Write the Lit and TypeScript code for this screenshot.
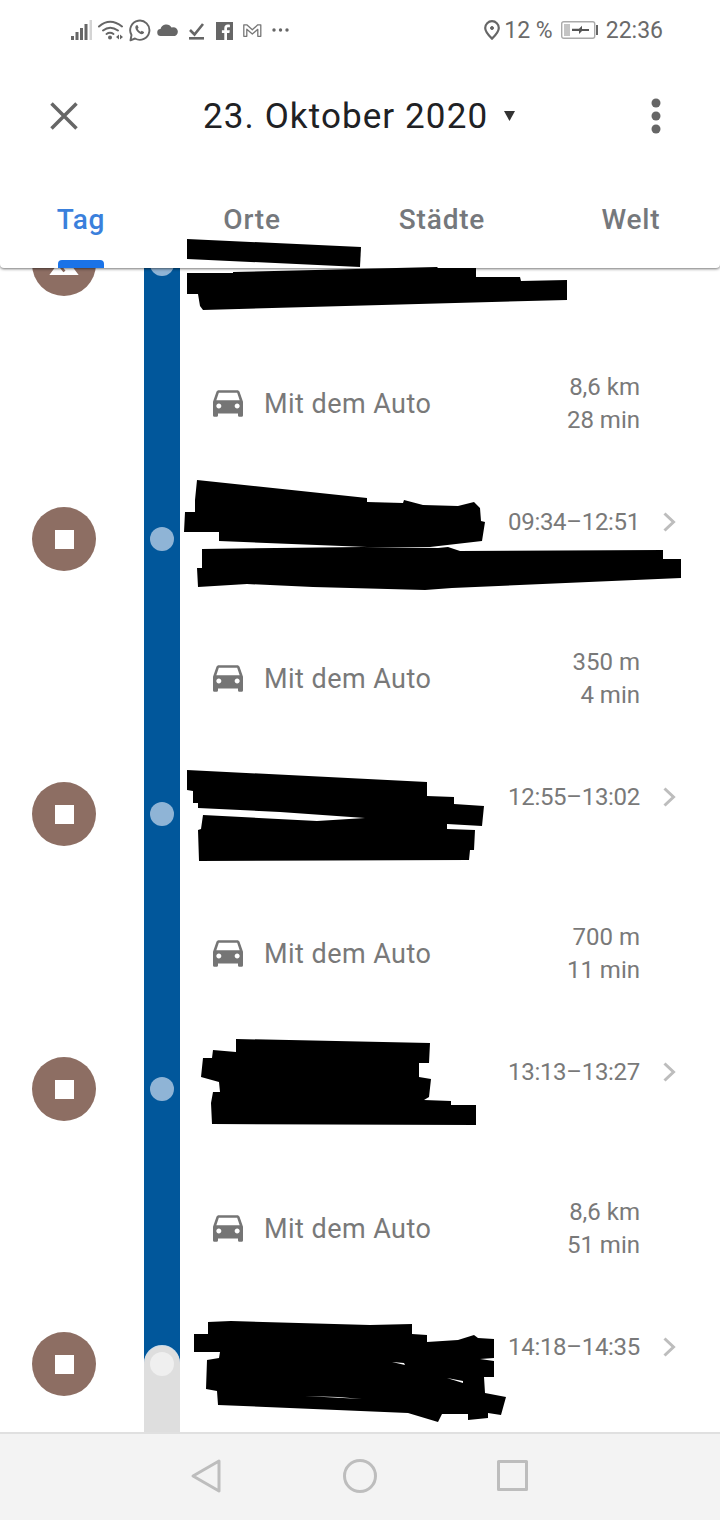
import { LitElement, html, css, svg } from 'lit';
import { customElement } from 'lit/decorators.js';

const CAR =
  'M18.92 6.01C18.72 5.42 18.16 5 17.5 5h-11c-.66 0-1.21.42-1.42 1.01L3 12v8c0 .55.45 1 1 1h1c.55 0 1-.45 1-1v-1h12v1c0 .55.45 1 1 1h1c.55 0 1-.45 1-1v-8l-2.08-5.99zM6.5 16c-.83 0-1.5-.67-1.5-1.5S5.67 13 6.5 13s1.5.67 1.5 1.5S7.33 16 6.5 16zm11 0c-.83 0-1.5-.67-1.5-1.5s.67-1.5 1.5-1.5 1.5.67 1.5 1.5-.67 1.5-1.5 1.5zM5 11l1.5-4.5h11L19 11H5z';

// scribbled-out place names, in page coordinates
const BLACK = [
  '187,239 361,247 360,267 187,259',
  '187,273 233,273 233,272 437,267 438,268 476,268 476,277 520,277 521,281 567,280 567,300 203,310 200,306 198,294 187,294',
  '197,480 367,498 367,502 403,503 404,500 423,505 458,506 474,502 480,508 481,521 485,522 482,541 430,547 367,547 219,541 219,532 184,532 185,512 195,512 195,500',
  '202,549 363,547 438,548 448,547 460,551 663,550 663,559 681,559 681,578 452,588 425,590 313,587 247,584 198,587 197,568 202,568',
  '187,770 427,782 427,796 454,797 454,804 484,806 482,826 447,824 447,829 475,830 474,850 470,850 469,860 199,861 198,830 201,829 203,815 317,821 365,818 280,812 198,808 198,803 193,803 193,791 187,790',
  '236,1039 430,1043 429,1063 419,1063 419,1077 431,1079 429,1097 424,1100 451,1101 451,1105 476,1105 476,1125 212,1124 211,1103 213,1092 220,1092 219,1082 201,1077 203,1058 212,1058 213,1050 236,1052',
  '208,1322 231,1321 370,1325 412,1324 412,1334 427,1335 427,1342 458,1340 474,1335 478,1338 494,1339 494,1358 480,1359 494,1361 494,1377 484,1377 485,1393 506,1397 501,1415 488,1413 488,1418 468,1420 468,1414 442,1414 438,1422 408,1413 218,1405 217,1391 206,1389 207,1360 219,1358 220,1352 194,1352 194,1334 208,1334',
];
const GAPS = ['392,1362 405,1365 404,1363', '447,1378 463,1383 463,1381', '305,1396 362,1399 338,1397'];

type Row = { kind: 'stop'; time: string; terrain?: boolean; last?: boolean } | { kind: 'drive'; dist: string; dur: string };

const ROWS: Row[] = [
  { kind: 'stop', time: '', terrain: true },
  { kind: 'drive', dist: '8,6 km', dur: '28 min' },
  { kind: 'stop', time: '09:34–12:51' },
  { kind: 'drive', dist: '350 m', dur: '4 min' },
  { kind: 'stop', time: '12:55–13:02' },
  { kind: 'drive', dist: '700 m', dur: '11 min' },
  { kind: 'stop', time: '13:13–13:27' },
  { kind: 'drive', dist: '8,6 km', dur: '51 min' },
  { kind: 'stop', time: '14:18–14:35', last: true },
];

@customElement('app-root')
export class AppRoot extends LitElement {
  static styles = css`
    :host {
      display: block;
      width: 720px;
      height: 1520px;
      font-family: Roboto, 'Noto Sans', sans-serif;
      background: #fff;
    }
    .page {
      position: relative;
      height: 1520px;
      display: flex;
      flex-direction: column;
      overflow: hidden;
    }
    header {
      position: relative;
      z-index: 2;
      height: 268px;
      flex: none;
      background: #fff;
      border-radius: 0 0 4px 4px;
      box-shadow: 0 1px 3px rgba(0, 0, 0, 0.55);
    }
    .status {
      height: 60px;
      display: flex;
      align-items: center;
      justify-content: space-between;
      padding: 0 57px 0 71px;
      color: #6a6a6a;
      font-size: 23px;
    }
    .status-right {
      display: flex;
      align-items: center;
    }
    .pin { margin-right: 4px; }
    .battery { margin: 0 8px; }
    .toolbar {
      height: 112px;
      display: flex;
      align-items: center;
      padding: 0 50px;
    }
    .title {
      margin-left: 125px;
      font-size: 35px;
      letter-spacing: 1.1px;
      color: #202124;
      white-space: nowrap;
    }
    .caret { margin-left: 16px; }
    .more { margin-left: auto; margin-right: 9px; }
    .tabs {
      height: 96px;
      display: grid;
      grid-template-columns: 162px 180px 200px 178px;
    }
    .tab {
      position: relative;
      display: flex;
      align-items: center;
      justify-content: center;
      padding-bottom: 2px;
      font-size: 28px;
      font-weight: 500;
      letter-spacing: 0.8px;
      color: #75787c;
    }
    .tab.active { color: #3a80dc; }
    .tab.active::after {
      content: '';
      position: absolute;
      left: 58px;
      bottom: 0;
      width: 46px;
      height: 8px;
      background: #1a73e8;
      border-radius: 4px 4px 0 0;
    }
    main {
      flex: 1;
      margin-top: -71px;
      display: flex;
      flex-direction: column;
      overflow: hidden;
    }
    .row {
      display: grid;
      grid-template-columns: 144px 36px 1fr;
      flex: none;
    }
    .row.stop { height: 134px; }
    .row.stop.last { flex: 1; }
    .row.drive { height: 141px; }
    .badge-cell {
      padding: 35px 0 0 32px;
    }
    .badge {
      width: 64px;
      height: 64px;
      border-radius: 50%;
      background: #8d6e63;
      display: flex;
      align-items: center;
      justify-content: center;
    }
    .square {
      width: 19px;
      height: 19px;
      background: #fff;
    }
    .terrain { margin-top: 6px; }
    .rail {
      position: relative;
      background: #01579b;
      display: flex;
      justify-content: center;
      align-items: flex-start;
    }
    .dot {
      position: relative;
      width: 24px;
      height: 24px;
      margin-top: 55px;
      border-radius: 50%;
      background: #8fb4d6;
    }
    .rest {
      position: absolute;
      left: 0;
      right: 0;
      top: 49px;
      bottom: 0;
      background: #dedede;
      border-radius: 18px 18px 0 0;
      box-shadow: 0 -1px 0 #c9dcec;
    }
    .last .dot { background: #efefef; }
    .stop-info {
      display: flex;
      justify-content: flex-end;
      align-items: center;
      height: 34px;
      margin-top: 33px;
      padding-right: 43px;
      font-size: 24px;
      letter-spacing: -0.3px;
      color: #797979;
    }
    .chevron { margin-left: 22px; }
    .drive-info {
      display: flex;
      align-items: center;
      padding: 5px 80px 0 33px;
      color: #797979;
    }
    .drive-info svg { margin-top: -2px; }
    .drive-label {
      margin-left: 21px;
      font-size: 27px;
      letter-spacing: 0.45px;
      flex: 1;
    }
    .drive-meta {
      font-size: 24px;
      line-height: 33px;
      text-align: right;
    }
    nav {
      height: 88px;
      flex: none;
      box-sizing: border-box;
      border-top: 2px solid #e0e0e0;
      padding-bottom: 2px;
      background: #f3f3f3;
      display: flex;
      align-items: center;
      justify-content: center;
      gap: 120px;
    }
    .scribble {
      position: absolute;
      inset: 0;
      z-index: 3;
      pointer-events: none;
    }
  `;

  private statusIcons() {
    return html`<svg width="218" height="24" viewBox="71 18 218 24" fill="#666">
      <rect x="71" y="36" width="3" height="4" />
      <rect x="75.5" y="32" width="3" height="8" />
      <rect x="80" y="28" width="3" height="12" />
      <rect x="84.5" y="24" width="3" height="16" />
      <rect x="89.5" y="20" width="2.5" height="20" fill="#d4d4d4" />
      <g fill="none" stroke="#666" stroke-width="2" stroke-linecap="round">
        <path d="M99 26.5Q110 17 122 26.5" />
        <path d="M103 30.5Q110 25 118 30.5" />
        <path d="M106.5 34Q110 31.5 113.5 34" />
      </g>
      <circle cx="110" cy="37.5" r="2" />
      <path d="M116 37l3-2.6v5.2zM120 34.4l3 2.6-3 2.6z" />
      <path d="M131.5 35A9.6 9.6 0 1 1 135 38.5L130.5 40.3z" fill="none" stroke="#666" stroke-width="1.9" stroke-linejoin="round" />
      <path d="M136 25.5c-1 1-1 3 .8 5.5s4.5 3.6 6 3c1-.4 1.5-1.5 1.2-2l-2.3-1.2-1 1c-1.3-.5-2.6-1.9-3-3l.9-1-1-2.5c-.4-.3-.9-.2-1.6.2z" />
      <path d="M161 36a3.5 3.5 0 0 1-.5-7a6 6 0 0 1 11-1.5a4.2 4.2 0 0 1 3.5 8.5z" />
      <path d="M190 30l4.5 4.5L203 24" fill="none" stroke="#666" stroke-width="2.6" />
      <rect x="189" y="37" width="15" height="2.6" />
      <rect x="216" y="22" width="17" height="18" />
      <path fill="#fff" d="M227 40v-7h2.4l.4-2.8h-2.8v-1.7c0-.8.3-1.3 1.4-1.3h1.5v-2.5c-.3 0-1.1-.1-2.1-.1-2.1 0-3.5 1.3-3.5 3.6v2h-2.4v2.8h2.4v7z" />
      <path d="M243.8 24.8h3l5.5 5 5.5-5h3v11.5h-3v-7l-5.5 4.8-5.5-4.8v7h-3z" fill="none" stroke="#777" stroke-width="1.3" stroke-linejoin="round" />
      <circle cx="274" cy="30" r="1.7" />
      <circle cx="280.5" cy="30" r="1.7" />
      <circle cx="287" cy="30" r="1.7" />
    </svg>`;
  }

  private renderRow(r: Row) {
    if (r.kind === 'drive') {
      return html`<div class="row drive">
        <div></div>
        <div class="rail"></div>
        <div class="drive-info">
          <svg width="30" height="27" viewBox="3 5 18 16" fill="#757575"><path d="${CAR}" /></svg>
          <div class="drive-label">Mit dem Auto</div>
          <div class="drive-meta">${r.dist}<br />${r.dur}</div>
        </div>
      </div>`;
    }
    return html`<div class="row stop ${r.last ? 'last' : ''}">
      <div class="badge-cell">
        <div class="badge">
          ${r.terrain
            ? html`<svg class="terrain" width="32" height="32" viewBox="0 0 24 24" fill="#fff">
                <path d="M14 6l-3.75 5 2.85 3.8-1.6 1.2C9.81 13.75 7 10 7 10l-6 8h22L14 6z" />
              </svg>`
            : html`<div class="square"></div>`}
        </div>
      </div>
      <div class="rail">
        ${r.last ? html`<div class="rest"></div>` : ''}
        <div class="dot"></div>
      </div>
      ${r.time
        ? html`<div class="stop-info">
            ${r.time}
            <svg class="chevron" width="15" height="20" viewBox="0 0 15 20" fill="none" stroke="#bdbdbd" stroke-width="3">
              <path d="M2.5 1.5L11.5 10 2.5 18.5" />
            </svg>
          </div>`
        : html`<div></div>`}
    </div>`;
  }

  render() {
    return html`<div class="page">
      <header>
        <div class="status">
          ${this.statusIcons()}
          <div class="status-right">
            <svg class="pin" width="16" height="20" viewBox="0 0 16 20" fill="none" stroke="#666" stroke-width="2.2">
              <path d="M8 1.2a6.8 6.8 0 0 0-6.8 6.8c0 4.2 6.8 10.6 6.8 10.6s6.8-6.4 6.8-10.6A6.8 6.8 0 0 0 8 1.2z" />
              <circle cx="8" cy="8" r="1.5" fill="#666" stroke-width="1" />
            </svg>
            <span>12 %</span>
            <svg class="battery" width="37" height="18" viewBox="0 0 37 18">
              <rect x="0.7" y="0.7" width="33" height="16.6" rx="2" fill="#fff" stroke="#aaa" stroke-width="1.4" />
              <rect x="3" y="3" width="6" height="12" fill="#c4c4c4" />
              <path d="M11 7.8h7l3-3v3.2h7v2h-7l-3 3V9.9h-7z" fill="#555" />
              <rect x="35" y="4" width="2" height="10" fill="#666" />
            </svg>
            <span>22:36</span>
          </div>
        </div>
        <div class="toolbar">
          <svg width="28" height="28" viewBox="0 0 28 28" stroke="#666" stroke-width="3.5">
            <path d="M1.5 1.5l25 25M26.5 1.5l-25 25" />
          </svg>
          <div class="title">23. Oktober 2020</div>
          <svg class="caret" width="11" height="10" viewBox="0 0 11 10" fill="#333"><path d="M0 0h11L5.5 10z" /></svg>
          <svg class="more" width="10" height="36" viewBox="0 0 10 36" fill="#666">
            <circle cx="5" cy="5" r="4.5" />
            <circle cx="5" cy="18" r="4.5" />
            <circle cx="5" cy="31" r="4.5" />
          </svg>
        </div>
        <div class="tabs">
          <div class="tab active">Tag</div>
          <div class="tab">Orte</div>
          <div class="tab">Städte</div>
          <div class="tab">Welt</div>
        </div>
      </header>
      <main>${ROWS.map((r) => this.renderRow(r))}</main>
      <nav>
        <svg width="34" height="36" viewBox="0 0 34 36" fill="none" stroke="#bdbdbd" stroke-width="3" stroke-linejoin="round">
          <path d="M30 3L4 18l26 15z" />
        </svg>
        <svg width="34" height="36" viewBox="0 0 34 36" fill="none" stroke="#bdbdbd" stroke-width="3">
          <circle cx="17" cy="18" r="15.5" />
        </svg>
        <svg width="34" height="36" viewBox="0 0 34 36" fill="none" stroke="#bdbdbd" stroke-width="3" stroke-linejoin="round">
          <rect x="1.5" y="3.5" width="28" height="28" />
        </svg>
      </nav>
      <svg class="scribble" width="720" height="1520" viewBox="0 0 720 1520">
        ${BLACK.map((p) => svg`<polygon points="${p}" fill="#000" />`)}
        ${GAPS.map((p) => svg`<polygon points="${p}" fill="#fff" />`)}
      </svg>
    </div>`;
  }
}
